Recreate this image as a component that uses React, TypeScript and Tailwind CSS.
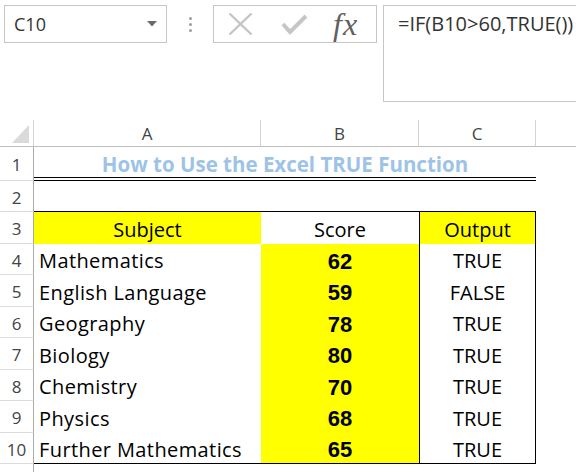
import React from 'react';

const rows = [
  { n: 4, subject: 'Mathematics', score: 62, out: 'TRUE' },
  { n: 5, subject: 'English Language', score: 59, out: 'FALSE' },
  { n: 6, subject: 'Geography', score: 78, out: 'TRUE' },
  { n: 7, subject: 'Biology', score: 80, out: 'TRUE' },
  { n: 8, subject: 'Chemistry', score: 70, out: 'TRUE' },
  { n: 9, subject: 'Physics', score: 68, out: 'TRUE' },
  { n: 10, subject: 'Further Mathematics', score: 65, out: 'TRUE' },
];

const RowHead = ({ n }: { n?: number }) => (
  <div className="flex items-center justify-center pt-[3px] border-r border-b border-r-[#ababab] border-b-[#dcdcdc] text-[17px] text-[#444]">
    {n}
  </div>
);

const ColHead = ({ label }: { label: string }) => (
  <div className="flex items-center justify-center pt-[1px] border-r border-b border-r-[#d4d4d4] border-b-[#bdbdbd] text-[17px] text-[#444]">
    {label}
  </div>
);

const App = () => {
  return (
    <div className="w-[576px] h-[472px] overflow-hidden bg-white font-['Open_Sans',sans-serif] text-black">
      {/* formula bar */}
      <div className="h-[120px] flex items-start pt-[5px]">
        <div className="ml-[4px] w-[163px] h-[38px] border border-[#c6c6c6] flex items-center justify-between pl-[9px] pr-[9px]">
          <span className="text-[18px] text-[#333]">C10</span>
          <svg width="10" height="6" viewBox="0 0 10 6">
            <polygon points="0,0 10,0 5,5.5" fill="#6b6b6b" />
          </svg>
        </div>
        <div className="ml-[21px] w-[4px] h-[38px] flex flex-col items-center justify-center gap-[3px]">
          <span className="w-[3px] h-[3px] rounded-full bg-[#9e9e9e]" />
          <span className="w-[3px] h-[3px] rounded-full bg-[#9e9e9e]" />
          <span className="w-[3px] h-[3px] rounded-full bg-[#9e9e9e]" />
        </div>
        <div className="ml-[21px] w-[164px] h-[38px] border border-[#c6c6c6] flex items-center">
          <svg className="ml-[14px]" width="25" height="24" viewBox="0 0 25 24">
            <path d="M1.5 1.5 L23.5 22.5 M23.5 1.5 L1.5 22.5" stroke="#c4c4c4" strokeWidth="2.4" fill="none" />
          </svg>
          <svg className="ml-[28px]" width="27" height="21" viewBox="0 0 27 21">
            <polyline points="2,10 9,18 25,2" stroke="#c6c6c6" strokeWidth="4" fill="none" />
          </svg>
          <span className="ml-[25px] font-['Liberation_Serif',serif] italic text-[32px] leading-none text-[#606060] tracking-[1px]">
            fx
          </span>
        </div>
        <div className="ml-[6px] flex-1 h-[97px] border border-r-0 border-[#c6c6c6] pl-[14px] pt-[4px]">
          <span className="text-[20px] leading-[28px] text-[#333]">=IF(B10&gt;60,TRUE())</span>
        </div>
      </div>

      {/* sheet */}
      <div className="grid grid-cols-[34px_227px_158px_117px_1fr] grid-rows-[27px_34px_31px_32px_31px_32px_31px_32px_31px_32px_31px_40px]">
        <div className="relative border-r border-b border-r-[#d4d4d4] border-b-[#bdbdbd]">
          <svg className="absolute left-0 top-0" width="33" height="26" viewBox="0 0 33 26">
            <polygon points="29,5 29,23 12,23" fill="#dadada" />
          </svg>
        </div>
        <ColHead label="A" />
        <ColHead label="B" />
        <ColHead label="C" />
        <div className="border-b border-b-[#bdbdbd]" />

        {/* row 1 */}
        <RowHead n={1} />
        <div className="col-span-3 flex items-center justify-center border-b-4 border-double border-black pt-[5px]">
          <span className="font-bold text-[20.5px] text-[#9dc3e6]">How to Use the Excel TRUE Function</span>
        </div>
        <div />

        {/* row 2 */}
        <RowHead n={2} />
        <div className="col-span-3 border-b border-black" />
        <div />

        {/* row 3 */}
        <RowHead n={3} />
        <div className="bg-[#ffff00] flex items-center justify-center pt-[3px] text-[20px]">Subject</div>
        <div className="flex items-center justify-center pt-[3px] text-[20px]">Score</div>
        <div className="bg-[#ffff00] border-l border-r border-black flex items-center justify-center pt-[3px] text-[20px]">
          Output
        </div>
        <div />

        {rows.map((r) => {
          const last = r.n === 10;
          return (
            <React.Fragment key={r.n}>
              <RowHead n={r.n} />
              <div className={`flex items-center pl-[5px] pt-[3px] text-[20px] tracking-[0.4px] whitespace-nowrap ${last ? 'border-b border-black' : ''}`}>
                {r.subject}
              </div>
              <div
                className={`bg-[#ffff00] flex items-center justify-center pt-[3px] font-['Liberation_Sans',Arial,sans-serif] font-bold text-[22px] ${last ? 'border-b border-black' : ''}`}
              >
                {r.score}
              </div>
              <div
                className={`border-l border-r border-black flex items-center justify-center pt-[3px] text-[20px] ${last ? 'border-b' : ''}`}
              >
                {r.out}
              </div>
              <div />
            </React.Fragment>
          );
        })}

        <RowHead />
        <div />
        <div />
        <div />
        <div />
      </div>
    </div>
  );
};

export default App;
